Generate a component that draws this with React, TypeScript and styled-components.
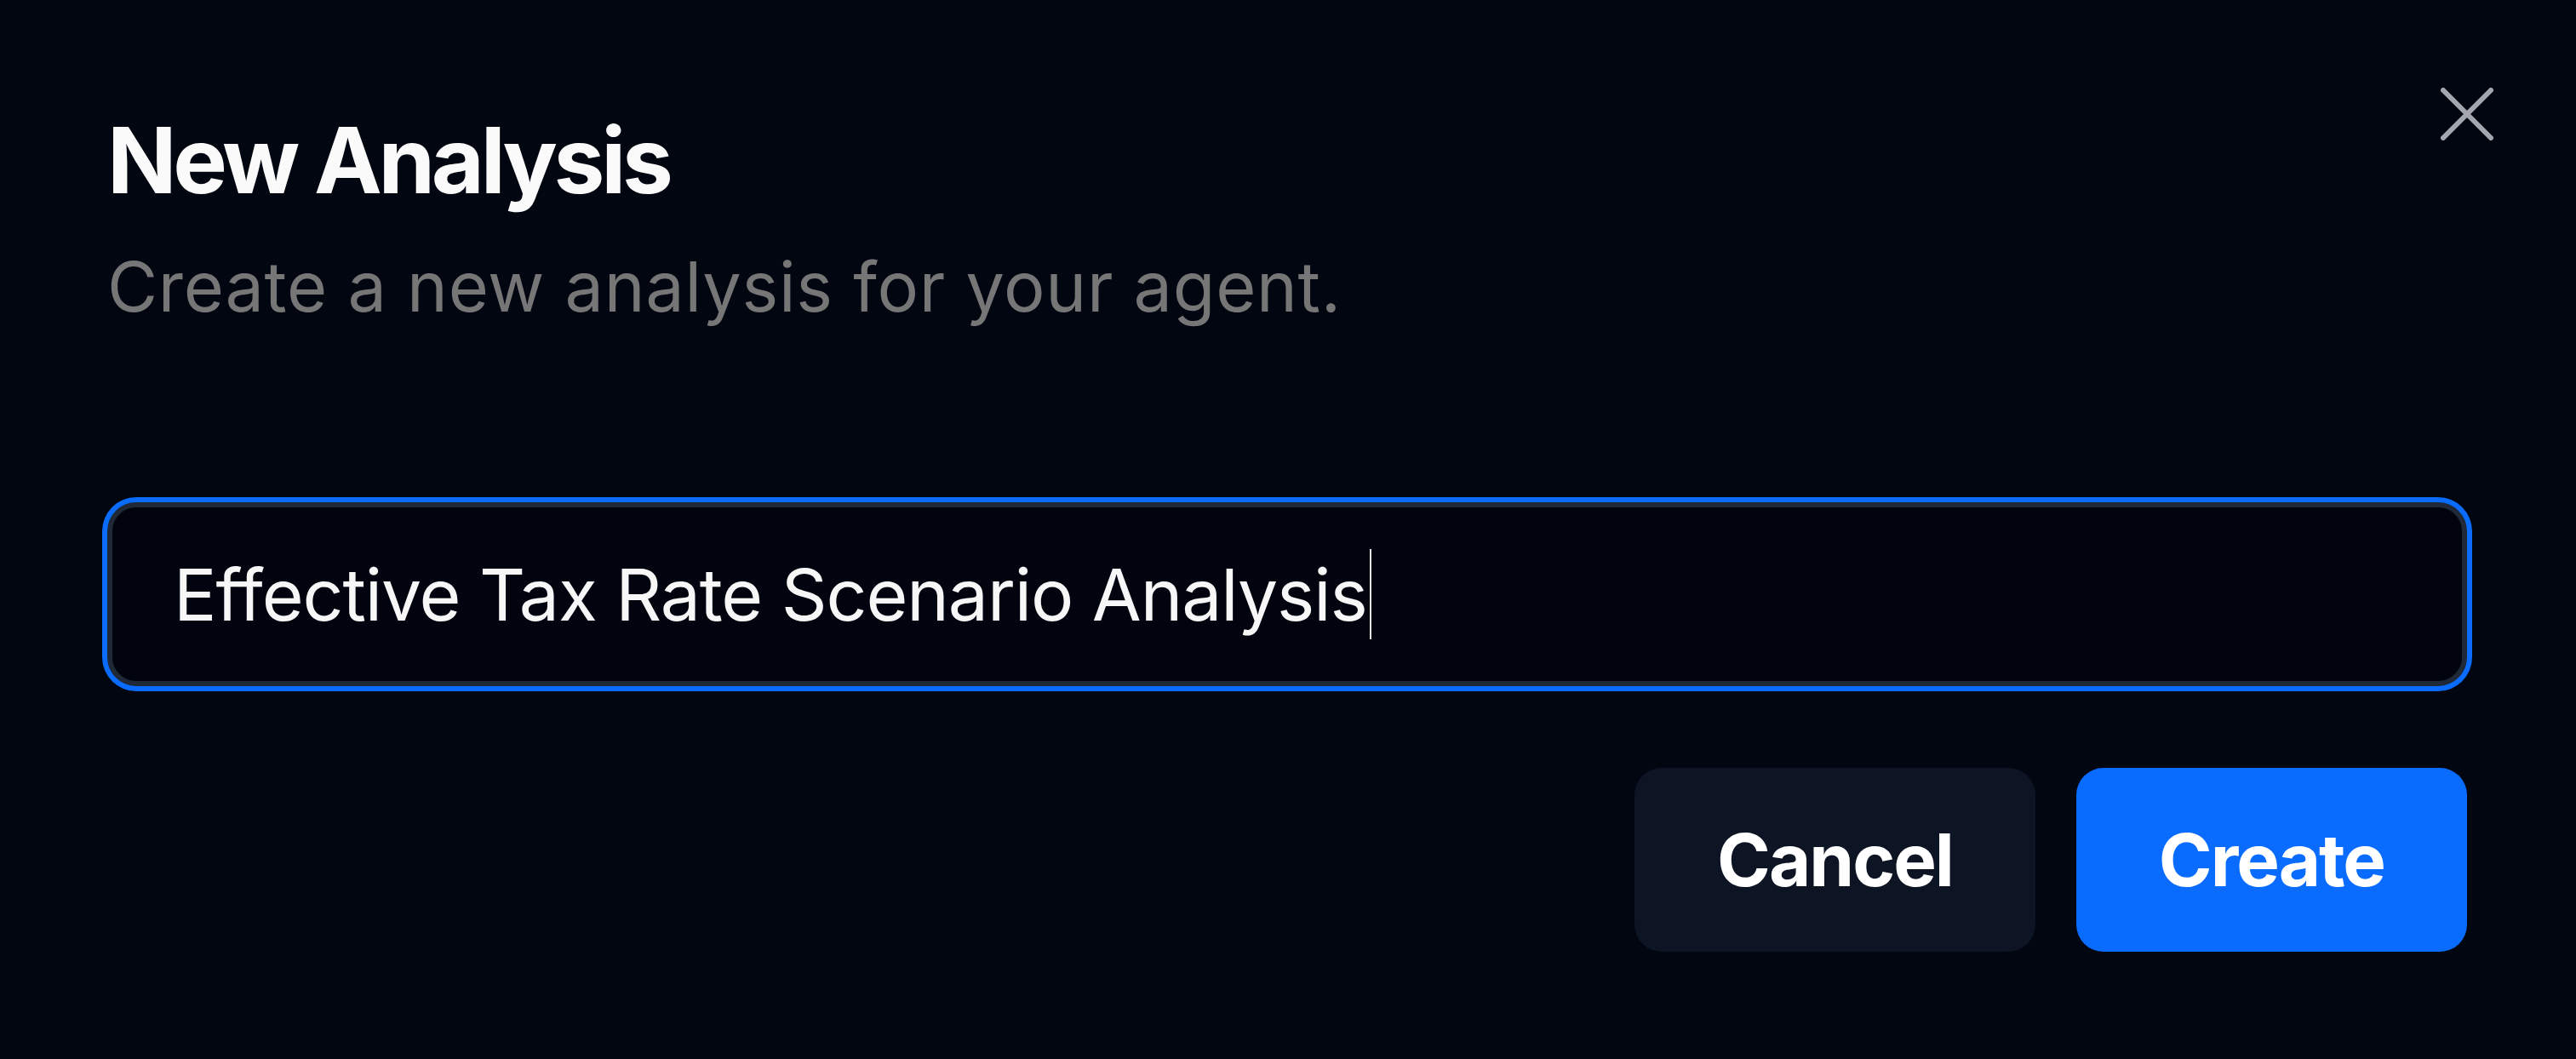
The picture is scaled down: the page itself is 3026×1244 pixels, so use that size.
import styled, { createGlobalStyle } from 'styled-components';

const GlobalStyle = createGlobalStyle`
  html, body {
    margin: 0;
    padding: 0;
    background: #020611;
  }
  * { box-sizing: border-box; }
`;

const Dialog = styled.div`
  position: relative;
  width: 3026px;
  height: 1244px;
  padding: 124px 128px 0 126px;
  background: #020611;
  font-family: Inter, 'Noto Sans', sans-serif;
  display: flex;
  flex-direction: column;
`;

const Title = styled.h2`
  margin: 0;
  font-size: 107px;
  line-height: 128px;
  font-weight: 700;
  letter-spacing: -4.3px;
  color: #fafafa;
`;

const Subtitle = styled.p`
  margin: 37px 0 0;
  font-size: 81px;
  line-height: 97px;
  font-weight: 400;
  letter-spacing: 0.7px;
  color: #767676;
`;

const Field = styled.div`
  margin-top: 204px;
  height: 216px;
  display: flex;
  align-items: center;
  padding-left: 72px;
  border: 6px solid #1f2937;
  border-radius: 34px;
  box-shadow: 0 0 0 6px #0a6cff;
  background: #01040f;
  font-size: 84px;
  letter-spacing: -1.1px;
  color: #f7f7f7;
  white-space: nowrap;
`;

const Caret = styled.span`
  display: inline-block;
  width: 2px;
  height: 106px;
  margin-left: 3px;
  background: #e5e5e5;
`;

const Footer = styled.div`
  margin-top: 96px;
  display: flex;
  justify-content: flex-end;
  gap: 48px;
`;

const Button = styled.button<{ primary?: boolean }>`
  height: 216px;
  padding: 0 97px;
  border: none;
  border-radius: 32px;
  font-family: inherit;
  font-size: 85px;
  font-weight: 700;
  letter-spacing: -2px;
  color: #ffffff;
  background: ${({ primary }) => (primary ? '#0a6cff' : '#0d1424')};
  cursor: pointer;
`;

const Close = styled.button`
  position: absolute;
  top: 86px;
  right: 80px;
  width: 96px;
  height: 96px;
  padding: 0;
  border: none;
  background: transparent;
  display: flex;
  align-items: center;
  justify-content: center;
  cursor: pointer;
`;

export default function App() {
  return (
    <>
      <GlobalStyle />
      <Dialog>
        <Close aria-label="Close">
          <svg width="62" height="62" viewBox="0 0 62 62" fill="none">
            <path d="M3 3L59 59M59 3L3 59" stroke="#a3a6ad" strokeWidth="6" strokeLinecap="round" />
          </svg>
        </Close>
        <Title>New Analysis</Title>
        <Subtitle>Create a new analysis for your agent.</Subtitle>
        <Field>
          <span>Effective Tax Rate Scenario Analysis</span>
          <Caret />
        </Field>
        <Footer>
          <Button>Cancel</Button>
          <Button primary>Create</Button>
        </Footer>
      </Dialog>
    </>
  );
}
